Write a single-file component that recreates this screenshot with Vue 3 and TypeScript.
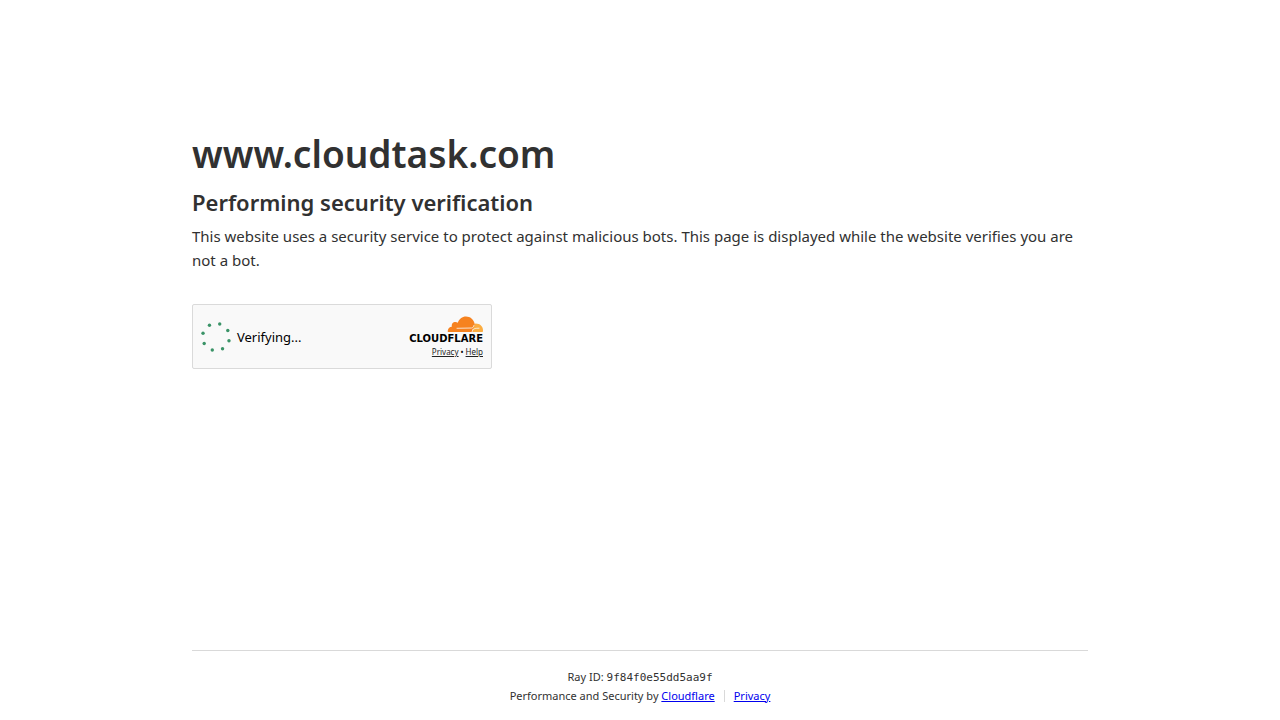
<script setup lang="ts">
const hostname: string = 'www.cloudtask.com'
const rayId: string = '9f84f0e55dd5aa9f'

interface Dot {
  x: number
  y: number
}

const dots: Dot[] = Array.from({ length: 8 }, (_, i) => {
  const angle = ((i * 45 - 74) * Math.PI) / 180
  return { x: 15 + 13.5 * Math.cos(angle), y: 15 + 13.5 * Math.sin(angle) }
})
</script>

<template>
  <div class="page">
    <main class="main">
      <h1>{{ hostname }}</h1>
      <h2>Performing security verification</h2>
      <p class="lead">
        This website uses a security service to protect against malicious bots. This page is displayed while the website
        verifies you are not a bot.
      </p>
      <section class="widget" aria-label="Security check">
        <div class="status" role="status">
          <svg class="spinner" viewBox="0 0 30 30" aria-hidden="true">
            <circle v-for="(dot, i) in dots" :key="i" :cx="dot.x" :cy="dot.y" r="1.7" fill="#3a9367" />
          </svg>
          <span>Verifying...</span>
        </div>
        <div class="brand">
          <svg class="cloud" viewBox="0 0 36 17" aria-hidden="true">
            <path
              fill="#f6821f"
              d="M0.9 16C0.6 15.6 0.7 15 0.9 14.1C1.4 12 2.6 10.9 4.8 10.8C4.3 8.4 5.7 6.5 7.5 6.1C8.8 5.8 9.8 6.1 10.8 6.8C11.9 3 15.2 0.4 19 0.4C23.2 0.4 26.6 3.2 27.6 7.4L28 9.4L27.2 12.8L26 16Z"
            />
            <path
              fill="#fbad41"
              d="M28.2 7.5C32.8 7.3 36 10.3 36 14C36 14.8 35.9 15.4 35.7 16H25.2L26.2 13.2C26.5 12.4 26.2 11.7 25.2 11.6L27 11.2Z"
            />
            <path
              fill="none"
              stroke="#f8f8f8"
              stroke-width="0.8"
              stroke-linecap="round"
              d="M10 12.3L24.6 12C25.8 11.8 26.6 10.7 27 9.4M25 16L26 13.3M26.4 13.3C27 12.5 28.2 12.3 32 12.2"
            />
          </svg>
          <span class="wordmark">CLOUDFLARE</span>
          <div class="terms">
            <a href="#privacy">Privacy</a><span>•</span><a href="#help">Help</a>
          </div>
        </div>
      </section>
    </main>
    <footer class="footer">
      <div class="footer-inner">
        <div>Ray ID: <code>{{ rayId }}</code></div>
        <div class="credits">
          <span>Performance and Security by <a href="#cloudflare">Cloudflare</a></span>
          <a class="privacy" href="#privacy-policy">Privacy</a>
        </div>
      </div>
    </footer>
  </div>
</template>

<style>
body {
  margin: 0;
  background: #fff;
}
</style>

<style scoped>
.page {
  display: flex;
  flex-direction: column;
  box-sizing: border-box;
  min-height: 100vh;
  color: #313131;
  font-family: 'Segoe UI', 'Noto Sans', sans-serif;
}

.main {
  flex: 1;
  box-sizing: border-box;
  width: 100%;
  max-width: 960px;
  margin: 0 auto;
  padding: 124px 32px 32px;
}

h1,
h2,
p {
  margin: 0;
}

h1 {
  font-size: 37px;
  font-weight: 600;
  line-height: 60px;
}

h2 {
  font-size: 22px;
  font-weight: 600;
  line-height: 36px;
}

.lead {
  margin-top: 4px;
  font-size: 15px;
  line-height: 24px;
}

.widget {
  display: flex;
  align-items: center;
  justify-content: space-between;
  box-sizing: border-box;
  width: 300px;
  max-width: 100%;
  min-height: 65px;
  margin-top: 32px;
  padding: 0 8px;
  border: 1px solid #dadada;
  border-radius: 2px;
  background: #f9f9f9;
  color: #000;
}

.status {
  display: flex;
  align-items: center;
  gap: 6px;
  font-size: 13px;
}

.spinner {
  width: 30px;
  height: 30px;
}

.brand {
  display: flex;
  flex-direction: column;
  align-items: flex-end;
  padding-top: 1px;
}

.cloud {
  width: 36px;
  height: 17px;
}

.wordmark {
  margin-top: 1px;
  font-family: 'DejaVu Sans', sans-serif;
  font-size: 10px;
  font-weight: 700;
  line-height: 10px;
}

.terms {
  display: flex;
  gap: 2px;
  margin-top: 2px;
  font-size: 8px;
  line-height: 12px;
}

.terms a {
  color: #232323;
}

.footer {
  box-sizing: border-box;
  width: 100%;
  max-width: 960px;
  margin: 0 auto;
  padding: 0 32px;
  font-size: 11px;
  line-height: 19px;
  text-align: center;
}

.footer-inner {
  padding: 16px 0 15px;
  border-top: 1px solid #d9d9d9;
}

.footer-inner a {
  color: #0000ee;
}

code {
  font-family: 'DejaVu Sans Mono', monospace;
  font-size: 11px;
  line-height: 1;
}

.credits {
  display: flex;
  align-items: center;
  justify-content: center;
  gap: 9px;
}

.privacy {
  padding-left: 9px;
  border-left: 1px solid #d9d9d9;
  line-height: 12px;
}
</style>
